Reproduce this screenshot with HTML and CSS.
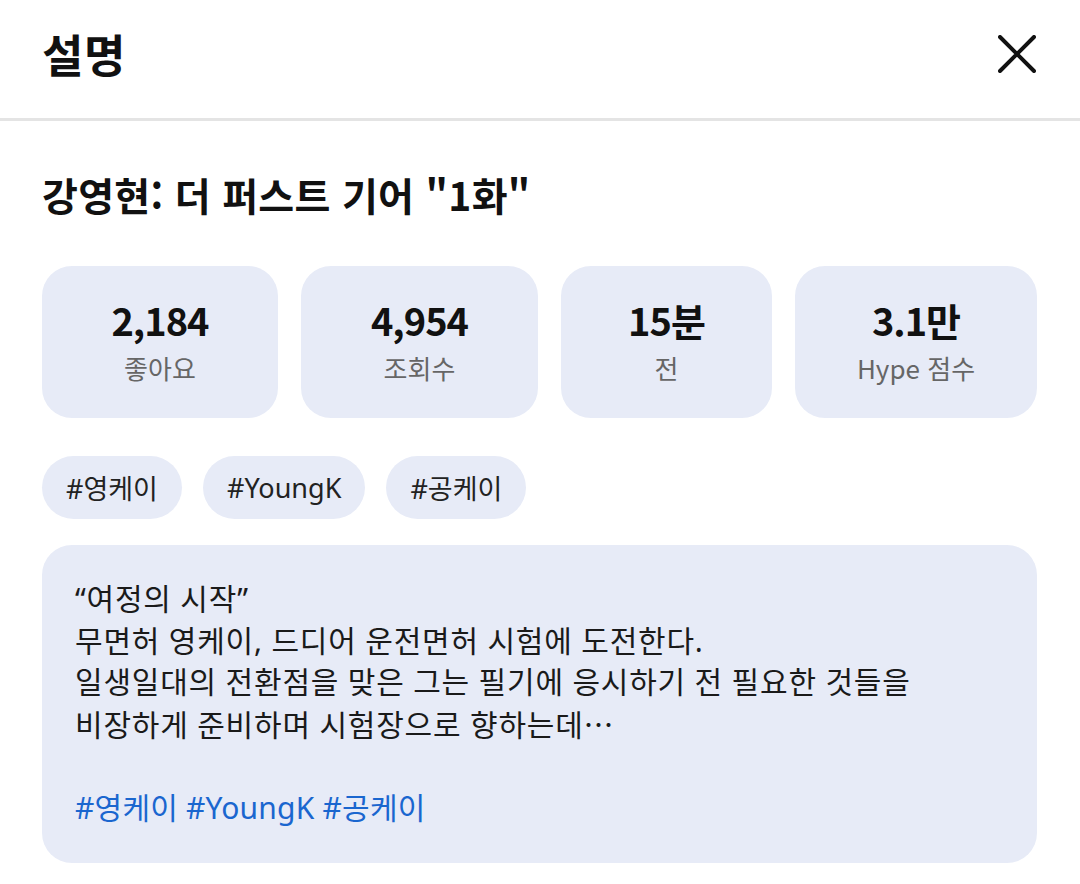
FILE: index.html
```html
<!DOCTYPE html>
<html lang="ko">
<head>
<meta charset="utf-8">
<title>설명</title>
<link rel="stylesheet" href="styles.css">
</head>
<body>
<header class="top">
  <h1 class="top-title">설명</h1>
  <button class="close" aria-label="닫기">
    <svg width="38" height="38" viewBox="0 0 38 38"><path d="M2 2 L36 36 M36 2 L2 36" stroke="#111" stroke-width="4" stroke-linecap="round" fill="none"/></svg>
  </button>
</header>
<main class="content">
  <h2 class="ep-title">강영현: 더 퍼스트 기어 "1화"</h2>
  <div class="stats">
    <div class="stat"><div class="num">2,184</div><div class="label">좋아요</div></div>
    <div class="stat"><div class="num">4,954</div><div class="label">조회수</div></div>
    <div class="stat"><div class="num">15분</div><div class="label">전</div></div>
    <div class="stat"><div class="num">3.1만</div><div class="label">Hype 점수</div></div>
  </div>
  <div class="tags">
    <span class="tag">#영케이</span>
    <span class="tag">#YoungK</span>
    <span class="tag">#공케이</span>
  </div>
  <div class="desc">
    <p class="desc-text">“여정의 시작”<br>무면허 영케이, 드디어 운전면허 시험에 도전한다.<br>일생일대의 전환점을 맞은 그는 필기에 응시하기 전 필요한 것들을<br>비장하게 준비하며 시험장으로 향하는데<span class="ellipsis">…</span></p>
    <p class="desc-tags"><span class="link">#영케이</span> <span class="link">#YoungK</span> <span class="link">#공케이</span></p>
  </div>
</main>
</body>
</html>
```
FILE: styles.css
```css
* { box-sizing: border-box; }
body {
  margin: 0;
  background: #fff;
  font-family: "Noto Sans", "Noto Sans CJK KR", sans-serif;
  color: #111;
}
.top {
  height: 121px;
  border-bottom: 3px solid #e4e4e4;
  display: flex;
  align-items: center;
  justify-content: space-between;
  padding: 0 44px 11px 42px;
}
.top-title {
  margin: 0;
  font-family: "Noto Sans CJK KR", sans-serif;
  font-size: 45px;
  font-weight: 700;
  line-height: 1;
  letter-spacing: 0.5px;
}
.close {
  border: 0;
  background: none;
  padding: 0;
  width: 38px;
  height: 38px;
  display: flex;
  cursor: pointer;
}
.content {
  padding: 0 43px 0 42px;
}
.ep-title {
  margin: 49px 0 0;
  font-family: "Noto Sans CJK KR", sans-serif;
  font-size: 39px;
  font-weight: 700;
  line-height: 48px;
  letter-spacing: 0.3px;
}
.stats {
  margin-top: 48px;
  display: grid;
  grid-template-columns: 236px 237px 211px 242px;
  justify-content: space-between;
}
.stat {
  height: 152px;
  background: #e7ebf7;
  border-radius: 30px;
  display: flex;
  flex-direction: column;
  align-items: center;
  justify-content: center;
  padding-bottom: 2px;
}
.num {
  font-family: "Noto Sans CJK KR", sans-serif;
  font-size: 38px;
  font-weight: 700;
  line-height: 46px;
  letter-spacing: -1px;
}
.label {
  font-family: "Noto Sans CJK KR", sans-serif;
  font-size: 26px;
  line-height: 36px;
  color: #666;
  margin-top: 7px;
}
.tags {
  margin-top: 38px;
  display: flex;
  gap: 21px;
}
.tag {
  height: 63px;
  padding: 0 24px;
  border-radius: 32px;
  background: #e7ebf7;
  font-size: 27px;
  color: #222;
  display: flex;
  align-items: center;
}
.desc {
  margin-top: 26px;
  background: #e7ebf7;
  border-radius: 30px;
  padding: 33px 33px 35px;
  font-size: 30px;
  line-height: 41.5px;
  letter-spacing: 0.8px;
  color: #1a1a1a;
}
.desc p { margin: 0; }
.desc-tags { margin-top: 41.5px !important; letter-spacing: 0.2px; }
.ellipsis { font-family: "Noto Sans CJK KR", sans-serif; }
.link { color: #1a66cf; }
```
